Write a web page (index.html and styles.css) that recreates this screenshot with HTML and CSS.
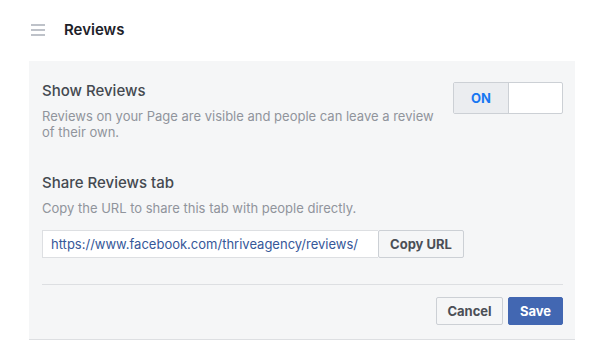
FILE: index.html
```html
<!DOCTYPE html>
<html>
<head>
<meta charset="utf-8">
<link rel="stylesheet" href="styles.css">
</head>
<body>
<header class="topbar">
  <svg class="menu-icon" width="14" height="12" viewBox="0 0 14 12"><rect x="0" y="0" width="14" height="2" fill="#bec2c9"/><rect x="0" y="5" width="14" height="2" fill="#bec2c9"/><rect x="0" y="10" width="14" height="2" fill="#bec2c9"/></svg>
  <h1 class="page-title">Reviews</h1>
</header>
<section class="panel">
  <div class="setting-row">
    <div class="setting-text">
      <h2 class="setting-title">Show Reviews</h2>
      <p class="setting-desc">Reviews on your Page are visible and people can leave a review of their own.</p>
    </div>
    <div class="toggle">
      <span class="toggle-on">ON</span>
      <span class="toggle-off"></span>
    </div>
  </div>
  <div class="share">
    <h2 class="setting-title">Share Reviews tab</h2>
    <p class="setting-desc">Copy the URL to share this tab with people directly.</p>
    <div class="url-row">
      <div class="url-input">https://www.facebook.com/thriveagency/reviews/</div>
      <button class="btn btn-copy">Copy URL</button>
    </div>
  </div>
  <div class="footer">
    <button class="btn btn-cancel">Cancel</button>
    <button class="btn btn-save">Save</button>
  </div>
</section>
</body>
</html>
```

FILE: styles.css
```css
* { box-sizing: border-box; }
body {
  margin: 0;
  background: #fff;
  font-family: Inter, "Liberation Sans", sans-serif;
  color: #4b4f56;
  width: 600px;
  height: 352px;
  overflow: hidden;
}
.topbar {
  display: flex;
  align-items: center;
  height: 61px;
  padding: 0 0 2px 31px;
}
.menu-icon { display: block; }
.page-title {
  margin: 0 0 0 19px;
  font-size: 15px;
  font-weight: 600;
  color: #1d2129;
}
.panel {
  margin-left: 29px;
  width: 546px;
  height: 279px;
  background: #f5f6f7;
  border-bottom: 1px solid #dddfe2;
  padding: 21px 12px 0 13px;
}
.setting-row {
  display: flex;
  justify-content: space-between;
  align-items: flex-start;
}
.setting-text { width: 400px; }
.setting-title {
  margin: 0;
  font-size: 15px;
  font-weight: 500;
  color: #444950;
  line-height: 18px;
}
.setting-desc {
  margin: 8px 0 0;
  font-size: 13px;
  line-height: 16px;
  color: #90949c;
}
.toggle {
  display: flex;
  width: 110px;
  height: 32px;
  border: 1px solid #ccd0d5;
  border-radius: 2px;
  overflow: hidden;
  background: #fff;
}
.toggle-on {
  width: 55px;
  background: #ebedf0;
  border-right: 1px solid #ccd0d5;
  color: #1877f2;
  font-weight: 700;
  font-size: 13px;
  display: flex;
  align-items: center;
  justify-content: center;
}
.toggle-off { flex: 1; }
.share { margin-top: 34px; }
.url-row {
  display: flex;
  margin-top: 14px;
  height: 28px;
}
.url-input {
  width: 336px;
  background: #fff;
  border: 1px solid #dddfe2;
  border-right: none;
  font-size: 13px;
  color: #365899;
  padding: 0 8px;
  display: flex;
  align-items: center;
}
.btn {
  font-family: inherit;
  font-size: 13px;
  font-weight: 700;
  height: 28px;
  border-radius: 2px;
  padding: 0;
  cursor: pointer;
}
.btn-copy {
  width: 86px;
  background: #f5f6f7;
  border: 1px solid #ccd0d5;
  color: #4b4f56;
}
.footer {
  margin-top: 26px;
  border-top: 1px solid #dddfe2;
  display: flex;
  justify-content: flex-end;
  gap: 5px;
  padding-top: 12px;
}
.btn-cancel {
  width: 67px;
  background: #f5f6f7;
  border: 1px solid #ccd0d5;
  color: #4b4f56;
}
.btn-save {
  width: 55px;
  background: #4267b2;
  border: 1px solid #4267b2;
  color: #fff;
}
```
